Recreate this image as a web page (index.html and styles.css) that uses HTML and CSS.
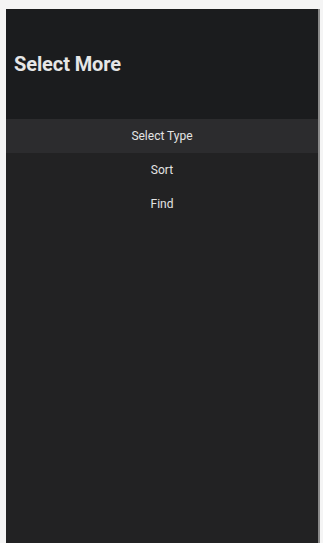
FILE: index.html
```html
<!DOCTYPE html>
<html>
<head>
<meta charset="utf-8">
<link rel="stylesheet" href="styles.css">
</head>
<body>
<div class="screen">
  <header class="header">
    <h1 class="title">Select More</h1>
  </header>
  <ul class="menu">
    <li class="item active">Select Type</li>
    <li class="item">Sort</li>
    <li class="item">Find</li>
  </ul>
</div>
</body>
</html>
```
FILE: styles.css
```css
html, body {
  margin: 0;
  padding: 0;
  background: #f4f4f4;
  height: 100%;
}
body {
  padding: 9px 3px 0 6px;
  box-sizing: border-box;
  font-family: Roboto, "Liberation Sans", sans-serif;
}
.screen {
  height: 100%;
  background: #222223;
  border-right: 2px solid #8a8a8a;
  display: flex;
  flex-direction: column;
}
.header {
  height: 110px;
  background: #1b1c1e;
  display: flex;
  align-items: center;
  padding-left: 8px;
}
.title {
  margin: 0;
  color: #e6e6e6;
  font-size: 20px;
  font-weight: 700;
  letter-spacing: -0.1px;
}
.menu {
  list-style: none;
  margin: 0;
  padding: 0;
}
.item {
  height: 34px;
  display: flex;
  align-items: center;
  justify-content: center;
  color: #e4e4e4;
  font-size: 12px;
  font-weight: 400;
}
.item.active {
  background: #2c2c2e;
}
```
